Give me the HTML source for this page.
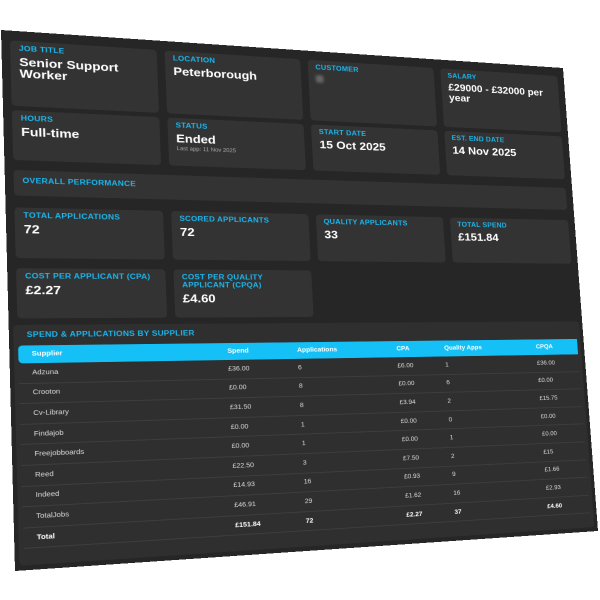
<!DOCTYPE html>
<html><head><meta charset="utf-8">
<style>
html,body{margin:0;padding:0;background:#fff;width:600px;height:600px;overflow:hidden}
#p{position:absolute;left:0;top:0;width:600px;height:580px;background:#262626;transform-origin:0 0;
transform:matrix3d(1.09102,0.081977,0,0.00027417, 0.022952,0.887574,0,-0.00007913, 0,0,1,0, 1,30,0,1);
font-family:"Liberation Sans",sans-serif;color:#fff}
.c{position:absolute;background:#333;border-radius:4px;box-sizing:border-box;padding:4px 8px}
.l{color:#1bb7ee;font-size:8px;font-weight:bold;text-transform:uppercase;letter-spacing:.2px}
.v{font-size:13px;font-weight:bold;margin-top:4px;line-height:13px}
.s{font-size:6px;color:#aaa;margin-top:3px}
table{position:absolute;left:8px;top:345px;width:584px;border-collapse:collapse;font-size:7px}
th{background:#15c0f6;color:#fff;text-align:left;font-weight:bold;height:19px;padding:0}
td{height:20.6px;border-bottom:1px solid #3e3e3e;padding:0;color:#ddd}
tr.t td{font-weight:bold;color:#fff}
</style></head><body>
<div id="p">
<div class="c" style="left:8px;top:11px;width:140px;height:73px"><div class="l">Job Title</div><div class="v">Senior Support Worker</div></div>
<div class="c" style="left:156px;top:11px;width:140px;height:73px"><div class="l">Location</div><div class="v">Peterborough</div></div>
<div class="c" style="left:304px;top:11px;width:140px;height:73px"><div class="l">Customer</div><div style="width:8px;height:9px;background:#666;margin-top:5px;border-radius:2px;filter:blur(1.5px)"></div></div>
<div class="c" style="left:452px;top:11px;width:140px;height:73px"><div class="l">Salary</div><div class="v" style="font-size:12px">£29000 - £32000 per year</div></div>

<div class="c" style="left:8px;top:89px;width:140px;height:55px"><div class="l">Hours</div><div class="v">Full-time</div></div>
<div class="c" style="left:156px;top:89px;width:140px;height:55px"><div class="l">Status</div><div class="v">Ended</div><div class="s">Last app: 11 Nov 2025</div></div>
<div class="c" style="left:304px;top:89px;width:140px;height:55px"><div class="l">Start Date</div><div class="v">15 Oct 2025</div></div>
<div class="c" style="left:452px;top:89px;width:140px;height:55px"><div class="l">Est. End Date</div><div class="v">14 Nov 2025</div></div>

<div class="c" style="left:8px;top:155px;width:584px;height:28px;padding-top:7px"><div class="l">Overall Performance</div></div>

<div class="c" style="left:8px;top:196px;width:140px;height:55px"><div class="l">Total Applications</div><div class="v">72</div></div>
<div class="c" style="left:156px;top:196px;width:140px;height:55px"><div class="l">Scored Applicants</div><div class="v">72</div></div>
<div class="c" style="left:304px;top:196px;width:140px;height:55px"><div class="l">Quality Applicants</div><div class="v">33</div></div>
<div class="c" style="left:452px;top:196px;width:140px;height:55px"><div class="l">Total Spend</div><div class="v">£151.84</div></div>

<div class="c" style="left:8px;top:262px;width:140px;height:54px"><div class="l">Cost per Applicant (CPA)</div><div class="v">£2.27</div></div>
<div class="c" style="left:156px;top:262px;width:140px;height:54px"><div class="l">Cost per Quality Applicant (CPQA)</div><div class="v">£4.60</div></div>

<div class="c" style="left:4px;top:323px;width:592px;height:252px;background:#2f2f2f;padding-top:6px"><div class="l" style="margin-left:4px">Spend &amp; Applications by Supplier</div></div>
<table>
<tr><th style="width:186px;padding-left:12px;border-radius:4px 0 0 4px">Supplier</th><th style="width:71px">Spend</th><th style="width:106px">Applications</th><th style="width:53px">CPA</th><th style="width:106px">Quality Apps</th><th>CPQA</th></tr>
<tr><td style="padding-left:12px">Adzuna</td><td>£36.00</td><td>6</td><td>£6.00</td><td>1</td><td>£36.00</td></tr>
<tr><td style="padding-left:12px">Crooton</td><td>£0.00</td><td>8</td><td>£0.00</td><td>6</td><td>£0.00</td></tr>
<tr><td style="padding-left:12px">Cv-Library</td><td>£31.50</td><td>8</td><td>£3.94</td><td>2</td><td>£15.75</td></tr>
<tr><td style="padding-left:12px">Findajob</td><td>£0.00</td><td>1</td><td>£0.00</td><td>0</td><td>£0.00</td></tr>
<tr><td style="padding-left:12px">Freejobboards</td><td>£0.00</td><td>1</td><td>£0.00</td><td>1</td><td>£0.00</td></tr>
<tr><td style="padding-left:12px">Reed</td><td>£22.50</td><td>3</td><td>£7.50</td><td>2</td><td>£15</td></tr>
<tr><td style="padding-left:12px">Indeed</td><td>£14.93</td><td>16</td><td>£0.93</td><td>9</td><td>£1.66</td></tr>
<tr><td style="padding-left:12px">TotalJobs</td><td>£46.91</td><td>29</td><td>£1.62</td><td>16</td><td>£2.93</td></tr>
<tr class="t"><td style="padding-left:12px">Total</td><td>£151.84</td><td>72</td><td>£2.27</td><td>37</td><td>£4.60</td></tr>
</table>
</div>
</body></html>
